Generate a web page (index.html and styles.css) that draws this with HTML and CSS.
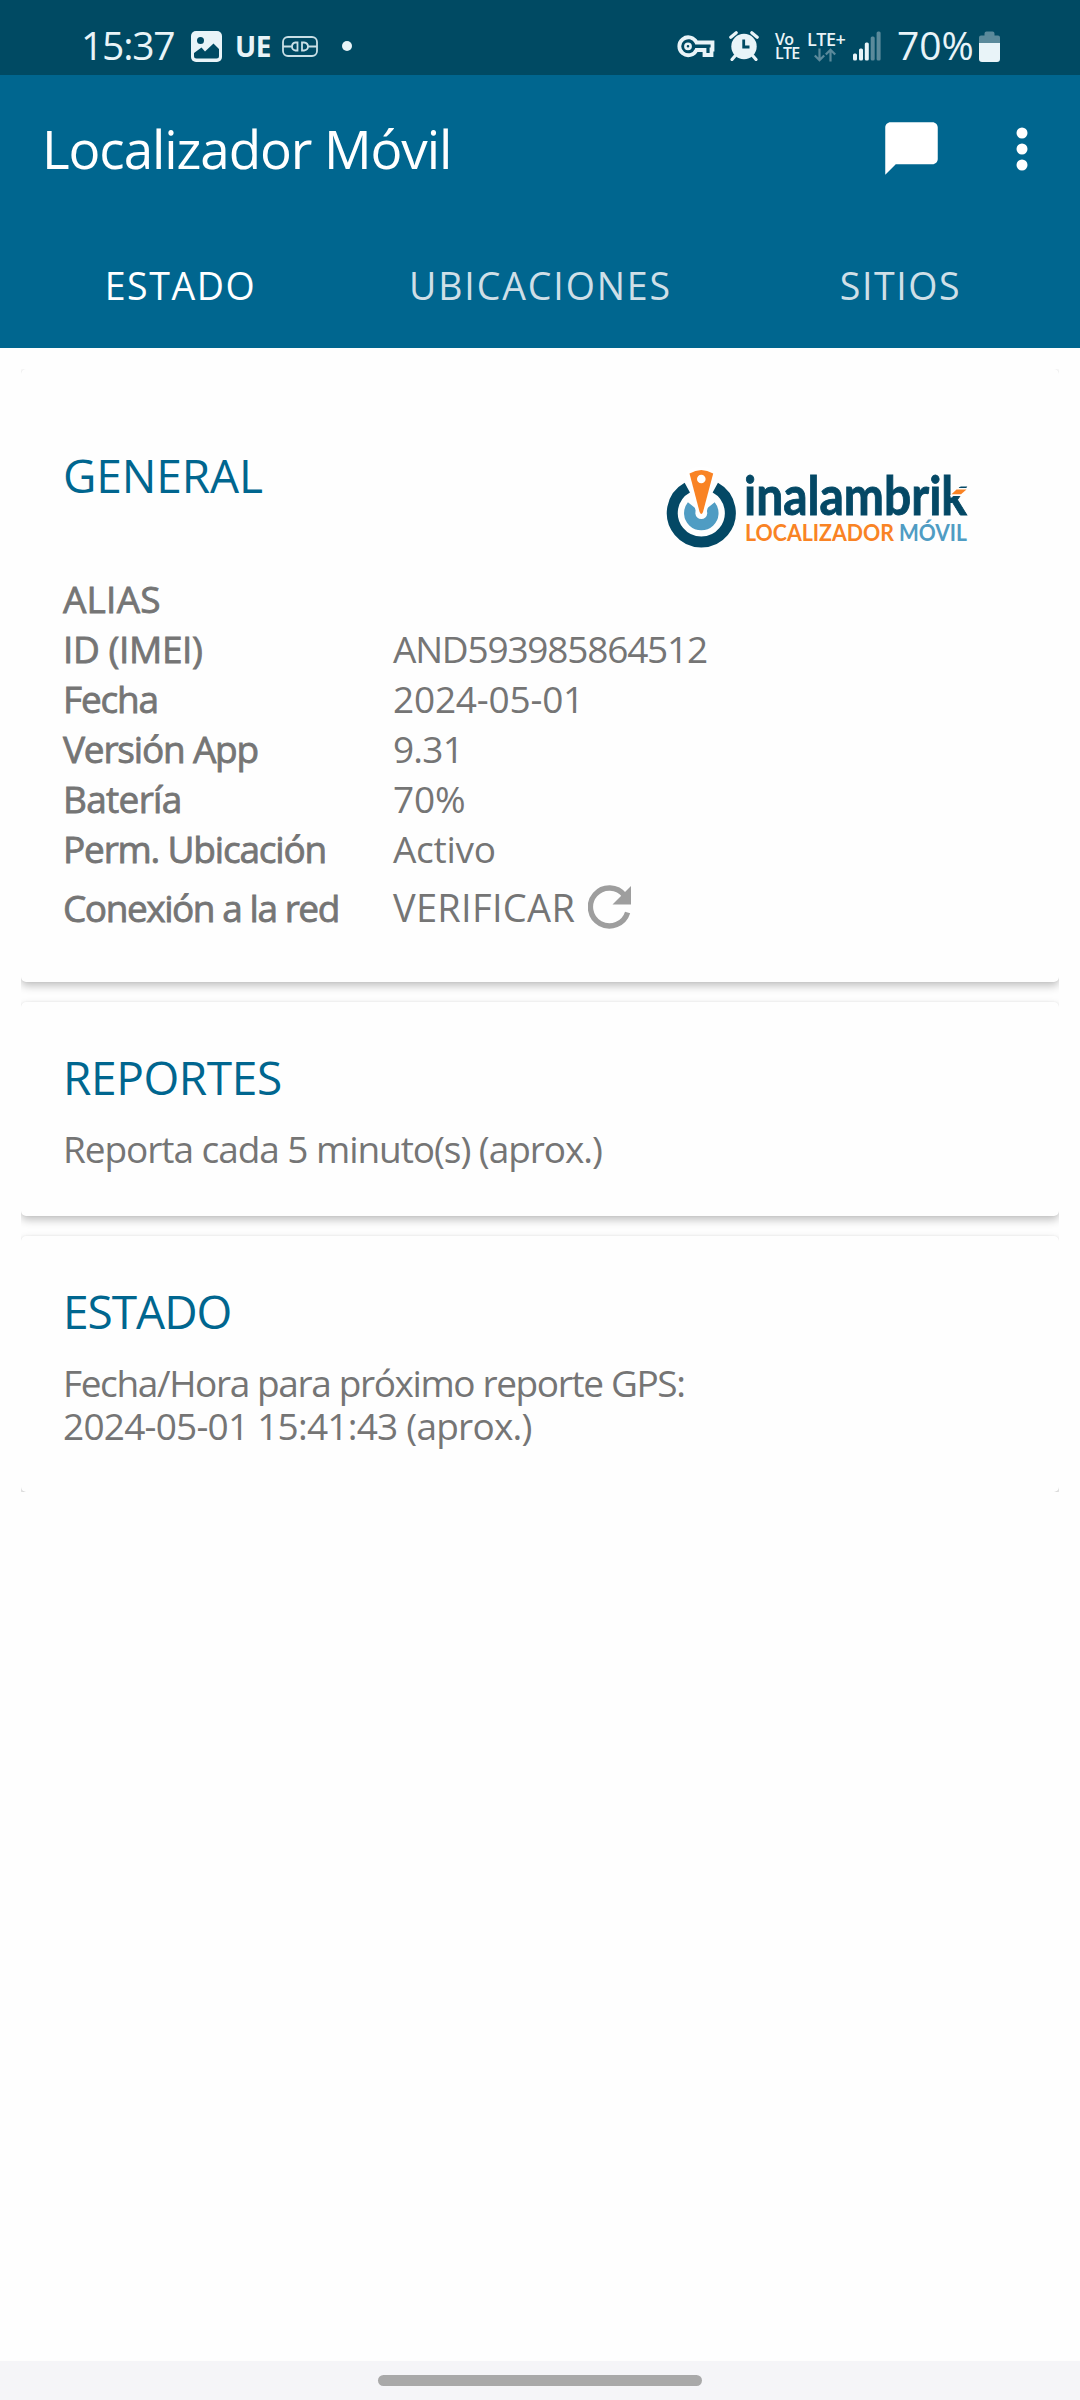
FILE: index.html
```
<!DOCTYPE html>
<html lang="es">
<head>
    <meta charset="UTF-8">
    <meta name="viewport" content="width=device-width, initial-scale=1.0">
    <title>Localizador Móvil</title>
    <link rel="stylesheet" href="styles.css">
</head>
<body>
    <div class="statusbar">
        <span class="time">15:37</span>
        <svg class="ic-image" width="31" height="31" viewBox="0 0 31 31">
            <rect width="31" height="31" rx="5" fill="#e9f4f8"/>
            <circle cx="9.5" cy="9.5" r="3.5" fill="#004a63"/>
            <path d="M3 22 L10.5 16.5 L14 20.5 L22.5 12.5 L28 18 V25 Q28 27.5 25.5 27.5 H5.5 Q3 27.5 3 25 Z" fill="#004a63"/>
        </svg>
        <span class="ue">UE</span>
        <svg class="ic-link" width="36" height="21" viewBox="0 0 36 21" fill="none" stroke="#c9dfe6" stroke-width="1.8">
            <rect x="1" y="1" width="34" height="19" rx="5"/>
            <path d="M1 10.5 H10 M26 10.5 H35 M15.5 6.5 V14.5 H13.5 Q10 14 10 10.5 Q10 7 13.5 6.5 Z M20 6.5 V14.5 H22 Q26 14 26 10.5 Q26 7 22 6.5 Z"/>
        </svg>
        <span class="dot"></span>

        <div class="status-right">
            <svg class="ic-key" width="38" height="23" viewBox="0 0 38 23" fill="none" stroke="#e9f4f8" stroke-width="3.8">
                <path d="M19.5 7.5 H35.5 V14.5 H34.5 V20 H27.5 V15 H19.5 A9 9 0 1 1 19.5 7.5 Z"/>
                <circle cx="11" cy="11.3" r="2.6" fill="#004a63" stroke-width="2.6"/>
            </svg>
            <svg class="ic-alarm" width="30" height="30" viewBox="0 0 30 30">
                <circle cx="15" cy="15.5" r="12.7" fill="#e9f4f8"/>
                <path d="M1.8 6.2 L7.2 1.8 M28.2 6.2 L22.8 1.8 M6 25 L3 28.5 M24 25 L27 28.5" stroke="#e9f4f8" stroke-width="3.2" stroke-linecap="round"/>
                <path d="M14.7 8.5 V16 H20.5" fill="none" stroke="#004a63" stroke-width="2.8"/>
            </svg>
            <span class="volte"><span>Vo</span><span>LTE</span></span>
            <span class="lte">
                <span>LTE+</span>
                <svg width="22" height="14" viewBox="0 0 22 14" fill="none" stroke="#5b8a9b" stroke-width="2.2">
                    <path d="M5.5 0.5 V12 M0.8 7.5 L5.5 12.3 L10.2 7.5 M16.5 13.5 V2 M11.8 6.5 L16.5 1.7 L21.2 6.5"/>
                </svg>
            </span>
            <svg class="ic-signal" width="28" height="30" viewBox="0 0 28 30" fill="#e9f4f8">
                <rect x="0" y="22.5" width="4" height="7" rx="1.5"/>
                <rect x="6" y="17.5" width="4" height="12" rx="1.5"/>
                <rect x="11.8" y="11.5" width="4" height="18" rx="1.5"/>
                <rect x="17.7" y="5.5" width="4" height="24" rx="1.5" fill="#5b8a9b"/>
                <rect x="23.6" y="0.5" width="4" height="29" rx="1.5" fill="#5b8a9b"/>
            </svg>
            <span class="percent">70%</span>
            <svg class="ic-battery" width="21" height="31" viewBox="0 0 21 31">
                <path d="M0 12 V6.5 Q0 4.5 2 4.5 H5.5 V2.5 Q5.5 0.5 7.5 0.5 H13.5 Q15.5 0.5 15.5 2.5 V4.5 H19 Q21 4.5 21 6.5 V12 Z" fill="#5b8a9b"/>
                <path d="M0 12 H21 V28 Q21 31 18 31 H3 Q0 31 0 28 Z" fill="#e9f4f8"/>
            </svg>
        </div>
    </div>

    <div class="header">
        <div class="toolbar">
            <h1>Localizador Móvil</h1>
            <svg class="ic-chat" width="63" height="63" viewBox="0 0 24 24">
                <path d="M20 2H4c-1.1 0-2 .9-2 2v18l4-4h14c1.1 0 2-.9 2-2V4c0-1.1-.9-2-2-2z" fill="#fff"/>
            </svg>
            <svg class="ic-more" width="12" height="44" viewBox="0 0 12 44" fill="#fff">
                <circle cx="6" cy="6" r="5.5"/>
                <circle cx="6" cy="22" r="5.5"/>
                <circle cx="6" cy="38" r="5.5"/>
            </svg>
        </div>
        <div class="tabs">
            <div class="tab active">ESTADO</div>
            <div class="tab tab-wide">UBICACIONES</div>
            <div class="tab">SITIOS</div>
        </div>
    </div>

    <div class="cards">
        <div class="card general">
            <div class="card-head">
                <h2>GENERAL</h2>
                <svg class="logo" width="315" height="90" viewBox="0 0 315 90">
                    <path d="M27.3 22.6 A29 29 0 1 0 55.3 22.6" fill="none" stroke="#044865" stroke-width="11"/>
                    <path d="M32.3 40.8 A11.6 11.6 0 1 0 50.3 40.8" fill="none" stroke="#4f9cc3" stroke-width="11.3"/>
                    <path d="M29.5 8.5 Q41.3 1.5 53.2 8.5 L43 47 Q41.3 51 39.6 47 Z" fill="#f98324" stroke="#fff" stroke-width="7" stroke-linejoin="round" paint-order="stroke"/>
                    <circle cx="41.3" cy="14" r="4.3" fill="#fff"/>
                    <text class="brand" x="84" y="50.3" textLength="223" lengthAdjust="spacingAndGlyphs">inalambrik</text>
                    <path d="M290 31 L296 23 H310 V27 L302 31 Z" fill="#fefefe"/>
                    <path d="M291.5 29.3 L296.5 24.6 H306.5 L301 29.3 Z" fill="#f98324"/>
                    <text class="brand-sub" x="85" y="75.5" textLength="149" lengthAdjust="spacingAndGlyphs" fill="#f98324">LOCALIZADOR</text>
                    <text class="brand-sub" x="239" y="75.5" textLength="68" lengthAdjust="spacingAndGlyphs" fill="#4f9cc3">MÓVIL</text>
                </svg>
            </div>
            <div class="row"><span class="label alias">ALIAS</span></div>
            <div class="row"><span class="label imei">ID (IMEI)</span><span class="long">AND593985864512</span></div>
            <div class="row"><span class="label">Fecha</span><span>2024-05-01</span></div>
            <div class="row"><span class="label">Versión App</span><span class="short">9.31</span></div>
            <div class="row"><span class="label bateria">Batería</span><span>70%</span></div>
            <div class="row"><span class="label">Perm. Ubicación</span><span class="activo">Activo</span></div>
            <div class="row red">
                <span class="label">Conexión a la red</span>
                <span class="verificar">VERIFICAR</span>
                <svg width="44" height="44" viewBox="0 0 44 44">
                    <path d="M36.6 10.5 A19 19 0 1 0 39.6 27.5" fill="none" stroke="#9e9e9e" stroke-width="5.4"/>
                    <path d="M43 1 V19.5 H24.5 Z" fill="#9e9e9e"/>
                </svg>
            </div>
        </div>

        <div class="card">
            <h2>REPORTES</h2>
            <p class="reporta">Reporta cada 5 minuto(s) (aprox.)</p>
        </div>

        <div class="card">
            <h2 class="estado">ESTADO</h2>
            <p class="proximo">Fecha/Hora para próximo reporte GPS:</p>
            <p class="fecha">2024-05-01 15:41:43 (aprox.)</p>
        </div>
    </div>

    <div class="navbar"><div class="pill"></div></div>
</body>
</html>
```
FILE: styles.css
```
* {
    box-sizing: border-box;
}
body {
    margin: 0;
    width: 1080px;
    height: 2400px;
    display: flex;
    flex-direction: column;
    background-color: #fefefe;
    font-family: "Open Sans", "Noto Sans", sans-serif;
    font-size: 37px;
    color: #757575;
    overflow: hidden;
}
h1, h2, p {
    margin: 0;
    font-weight: 400;
}
svg {
    display: block;
    flex-shrink: 0;
}

/* status bar */
.statusbar {
    display: flex;
    align-items: center;
    height: 75px;
    padding: 17px 80px 0 81px;
    background-color: #004a63;
    color: #e9f4f8;
    white-space: nowrap;
}
.time, .percent {
    font-size: 39px;
    line-height: 50px;
    padding-bottom: 3px;
}
.time {
    width: 110px;
    letter-spacing: -1.2px;
}
.ue {
    width: 46px;
    margin-left: 13px;
    font-size: 28px;
    font-weight: 700;
    line-height: 30px;
    letter-spacing: -0.5px;
}
.ic-link {
    margin-left: 1px;
}
.dot {
    width: 10px;
    height: 10px;
    margin-left: 24px;
    border-radius: 50%;
    background-color: #e9f4f8;
}
.status-right {
    display: flex;
    align-items: center;
    margin-left: auto;
}
.ic-key {
    margin-right: 14px;
}
.ic-alarm {
    margin-right: 16px;
}
.volte {
    display: flex;
    flex-direction: column;
    width: 32px;
    font-size: 16px;
    font-weight: 600;
    line-height: 14px;
    letter-spacing: -0.7px;
}
.lte {
    display: flex;
    flex-direction: column;
    width: 46px;
    font-size: 18px;
    font-weight: 600;
    line-height: 18px;
    letter-spacing: -0.5px;
}
.lte svg {
    margin-left: 7px;
}
.percent {
    width: 82px;
    margin-left: 16px;
    letter-spacing: -0.1px;
}

/* header */
.header {
    height: 273px;
    background-color: #00668f;
    color: #fff;
}
.toolbar {
    display: flex;
    align-items: center;
    height: 147px;
    padding: 0 52px 0 42px;
}
.toolbar h1 {
    flex: 1;
    font-size: 53px;
    letter-spacing: -1.1px;
}
.ic-chat {
    margin-right: 73px;
}
.tabs {
    display: flex;
}
.tab {
    flex: 1;
    padding-left: 1px;
    font-size: 37.5px;
    line-height: 128px;
    letter-spacing: 1.6px;
    text-align: center;
    color: #cfdfe7;
}
.tab-wide {
    letter-spacing: 1.9px;
}
.tab.active {
    color: #fff;
}

/* cards */
.cards {
    display: flex;
    flex-direction: column;
    gap: 20px;
    margin: 21px 21px 0;
    overflow: hidden;
}
.card {
    padding: 45px 42px;
    border-radius: 5px;
    background-color: #fefefe;
    box-shadow: 0 4px 9px rgba(0, 0, 0, 0.24), 0 0 2px rgba(0, 0, 0, 0.08);
}
.card h2 {
    margin-bottom: 20px;
    font-size: 46px;
    line-height: 60px;
    letter-spacing: -0.4px;
    color: #00668f;
}
.card .estado {
    letter-spacing: -1px;
}
.card p {
    line-height: 43px;
}
.card .reporta {
    letter-spacing: -1.06px;
    padding-bottom: 1px;
}
.proximo {
    letter-spacing: -1.38px;
}
.fecha {
    letter-spacing: -0.77px;
}
.general {
    padding-top: 76px;
    padding-bottom: 41px;
}
.card-head {
    display: flex;
    justify-content: space-between;
    height: 128px;
}
.card-head h2 {
    letter-spacing: -0.1px;
}
.logo {
    margin: 20px 42px 0 0;
    overflow: visible;
}
.brand {
    font-family: Lato, sans-serif;
    font-size: 54px;
    font-weight: 700;
    fill: #044865;
    stroke: #044865;
    stroke-width: 0.9px;
}
.brand-sub {
    font-family: Lato, sans-serif;
    font-size: 22px;
    font-weight: 700;
}
.row {
    display: flex;
    align-items: center;
    height: 50px;
    letter-spacing: -0.2px;
    white-space: nowrap;
}
.row.red {
    height: 68px;
}
.label {
    width: 330px;
    letter-spacing: -1.2px;
    -webkit-text-stroke: 0.8px #757575;
}
.red .label {
    letter-spacing: -1.45px;
}
.alias {
    letter-spacing: 0.2px;
}
.imei {
    letter-spacing: -0.4px;
}
.bateria {
    letter-spacing: -0.7px;
}
.long {
    letter-spacing: -1.2px;
}
.short {
    letter-spacing: -0.8px;
}
.activo {
    letter-spacing: -0.3px;
}
.verificar {
    width: 195px;
    font-size: 38px;
    letter-spacing: 0.3px;
}

/* gesture bar */
.navbar {
    height: 39px;
    margin-top: auto;
    padding-top: 14px;
    background-color: #f5f5f8;
}
.pill {
    width: 324px;
    height: 11px;
    margin: 0 auto;
    border-radius: 6px;
    background-color: #a9a9a9;
}
```
